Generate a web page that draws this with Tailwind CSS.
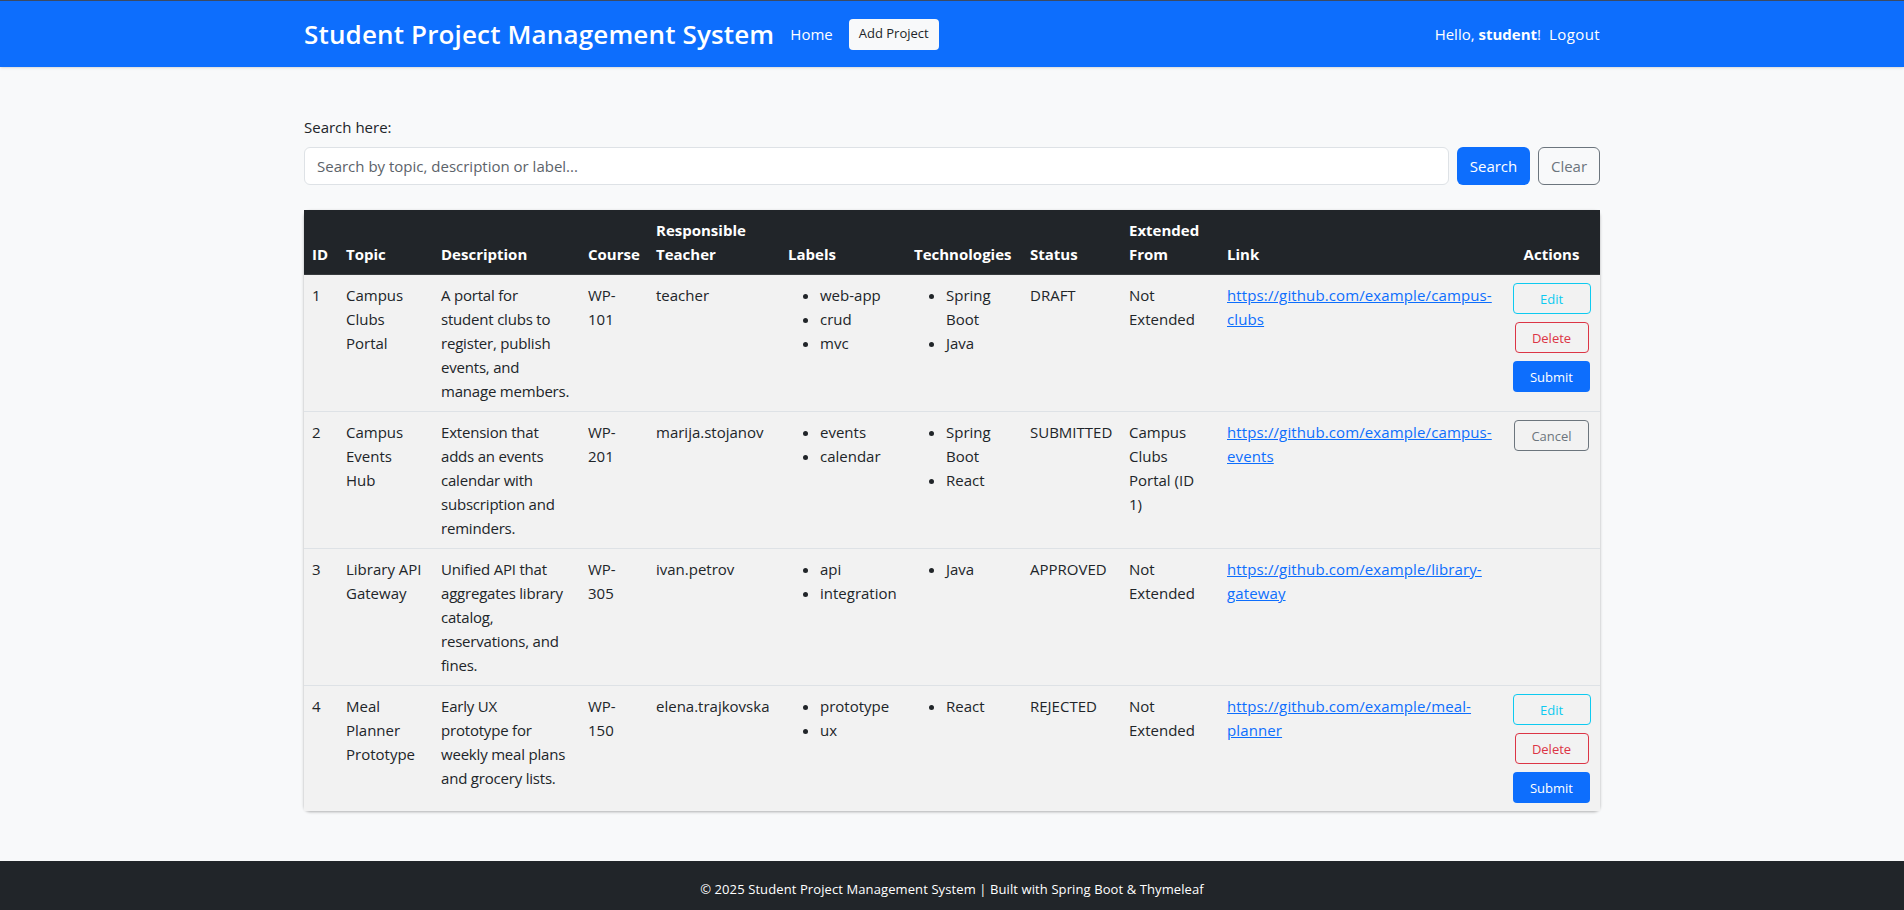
<!DOCTYPE html>
<html lang="en">
  <head>
    <meta charset="UTF-8" />
    <title>Student Project Management System</title>
    <script src="https://cdn.jsdelivr.net/npm/@tailwindcss/browser@4"></script>
  </head>
  <body class="h-[910px] flex flex-col bg-[#f8f9fa] text-[#212529] font-['Open_Sans',sans-serif] text-[15px] overflow-hidden">
    <!-- Navbar -->
    <nav class="h-[67px] shrink-0 bg-[#0d6efd] border-t border-[#3b4a63] shadow-sm">
      <div class="w-[1296px] h-full mx-auto flex items-center text-white">
        <a class="text-[26px] font-semibold tracking-[0.15px] mr-4">Student Project Management System</a>
        <a class="mr-[16px]">Home</a>
        <a class="h-[31px] w-[90px] rounded bg-[#f8f9fa] text-[#212529] text-[13px] flex items-center justify-center">Add Project</a>
        <div class="ml-auto flex gap-[8px]">
          <span>Hello, <b>student</b>!</span>
          <a class="tracking-[0.4px]">Logout</a>
        </div>
      </div>
    </nav>

    <main class="flex-1 w-[1296px] mx-auto pt-[48px]">
      <label class="block mb-2 h-[24px] leading-6">Search here:</label>
      <form class="flex gap-2 h-[38px]">
        <input class="flex-1 bg-white border border-[#dee2e6] rounded-md px-3 placeholder:text-[#5c636a]" placeholder="Search by topic, description or label..." />
        <button class="w-[73px] rounded-md bg-[#0d6efd] text-white">Search</button>
        <button class="w-[62px] rounded-md border border-[#6c757d] text-[#6c757d]">Clear</button>
      </form>

      <div class="mt-[25px] rounded-md shadow-[0_1px_3px_rgba(0,0,0,0.3)]">
        <table class="w-full table-fixed leading-6">
          <thead class="bg-[#212529] text-white text-left align-bottom font-bold">
            <tr class="border-b border-[#373b3e]">
              <th class="w-[34px] p-2">ID</th>
              <th class="w-[95px] p-2">Topic</th>
              <th class="w-[147px] p-2">Description</th>
              <th class="w-[68px] p-2">Course</th>
              <th class="w-[132px] p-2">Responsible Teacher</th>
              <th class="w-[126px] p-2">Labels</th>
              <th class="w-[116px] p-2">Technologies</th>
              <th class="w-[99px] p-2">Status</th>
              <th class="w-[98px] p-2">Extended From</th>
              <th class="w-[284px] p-2">Link</th>
              <th class="p-2 text-center">Actions</th>
            </tr>
          </thead>
          <tbody class="bg-[#f2f2f2] align-top">
            <tr class="border-b border-[#dee2e6]">
              <td class="p-2">1</td>
              <td class="p-2">Campus Clubs Portal</td>
              <td class="p-2 whitespace-nowrap tracking-[-0.2px]">A portal for<br />student clubs to<br />register, publish<br />events, and<br />manage members.</td>
              <td class="p-2">WP-101</td>
              <td class="p-2">teacher</td>
              <td class="p-2"><ul class="list-disc pl-8"><li>web-app</li><li>crud</li><li>mvc</li></ul></td>
              <td class="p-2"><ul class="list-disc pl-8"><li>Spring Boot</li><li>Java</li></ul></td>
              <td class="p-2">DRAFT</td>
              <td class="p-2">Not Extended</td>
              <td class="p-2"><a class="text-[#0d6efd] underline tracking-[0.12px]">https://github.com/example/campus-clubs</a></td>
              <td class="p-2">
                <div class="flex flex-col items-center gap-2 text-[13px]">
                  <a class="h-[31px] w-[78px] rounded border border-[#0dcaf0] text-[#0dcaf0] flex items-center justify-center">Edit</a>
                  <a class="h-[31px] w-[74px] rounded border border-[#dc3545] text-[#dc3545] flex items-center justify-center">Delete</a>
                  <a class="h-[31px] w-[77px] rounded bg-[#0d6efd] text-white flex items-center justify-center">Submit</a>
                </div>
              </td>
            </tr>
            <tr class="border-b border-[#dee2e6]">
              <td class="p-2">2</td>
              <td class="p-2">Campus Events Hub</td>
              <td class="p-2 whitespace-nowrap tracking-[-0.2px]">Extension that<br />adds an events<br />calendar with<br />subscription and<br />reminders.</td>
              <td class="p-2">WP-201</td>
              <td class="p-2">marija.stojanov</td>
              <td class="p-2"><ul class="list-disc pl-8"><li>events</li><li>calendar</li></ul></td>
              <td class="p-2"><ul class="list-disc pl-8"><li>Spring Boot</li><li>React</li></ul></td>
              <td class="p-2">SUBMITTED</td>
              <td class="p-2">Campus Clubs Portal (ID<br />1)</td>
              <td class="p-2"><a class="text-[#0d6efd] underline tracking-[0.12px]">https://github.com/example/campus-events</a></td>
              <td class="p-2">
                <div class="flex flex-col items-center gap-2 text-[13px]">
                  <a class="h-[31px] w-[75px] rounded border border-[#6c757d] text-[#6c757d] flex items-center justify-center">Cancel</a>
                </div>
              </td>
            </tr>
            <tr class="border-b border-[#dee2e6]">
              <td class="p-2">3</td>
              <td class="p-2">Library API Gateway</td>
              <td class="p-2 whitespace-nowrap tracking-[-0.2px]">Unified API that<br />aggregates library<br />catalog,<br />reservations, and<br />fines.</td>
              <td class="p-2">WP-305</td>
              <td class="p-2">ivan.petrov</td>
              <td class="p-2"><ul class="list-disc pl-8"><li>api</li><li>integration</li></ul></td>
              <td class="p-2"><ul class="list-disc pl-8"><li>Java</li></ul></td>
              <td class="p-2">APPROVED</td>
              <td class="p-2">Not Extended</td>
              <td class="p-2"><a class="text-[#0d6efd] underline tracking-[0.12px]">https://github.com/example/library-gateway</a></td>
              <td class="p-2"></td>
            </tr>
            <tr>
              <td class="p-2">4</td>
              <td class="p-2">Meal Planner Prototype</td>
              <td class="p-2 whitespace-nowrap tracking-[-0.2px]">Early UX<br />prototype for<br />weekly meal plans<br />and grocery lists.</td>
              <td class="p-2">WP-150</td>
              <td class="p-2">elena.trajkovska</td>
              <td class="p-2"><ul class="list-disc pl-8"><li>prototype</li><li>ux</li></ul></td>
              <td class="p-2"><ul class="list-disc pl-8"><li>React</li></ul></td>
              <td class="p-2">REJECTED</td>
              <td class="p-2">Not Extended</td>
              <td class="p-2"><a class="text-[#0d6efd] underline tracking-[0.12px]">https://github.com/example/meal-planner</a></td>
              <td class="p-2">
                <div class="flex flex-col items-center gap-2 text-[13px]">
                  <a class="h-[31px] w-[78px] rounded border border-[#0dcaf0] text-[#0dcaf0] flex items-center justify-center">Edit</a>
                  <a class="h-[31px] w-[74px] rounded border border-[#dc3545] text-[#dc3545] flex items-center justify-center">Delete</a>
                  <a class="h-[31px] w-[77px] rounded bg-[#0d6efd] text-white flex items-center justify-center">Submit</a>
                </div>
              </td>
            </tr>
          </tbody>
        </table>
      </div>
    </main>

    <footer class="h-[49px] shrink-0 pt-[8px] bg-[#212529] text-white text-[13px] tracking-[0.1px] flex items-center justify-center">
      © 2025 Student Project Management System | Built with Spring Boot &amp; Thymeleaf
    </footer>
  </body>
</html>
